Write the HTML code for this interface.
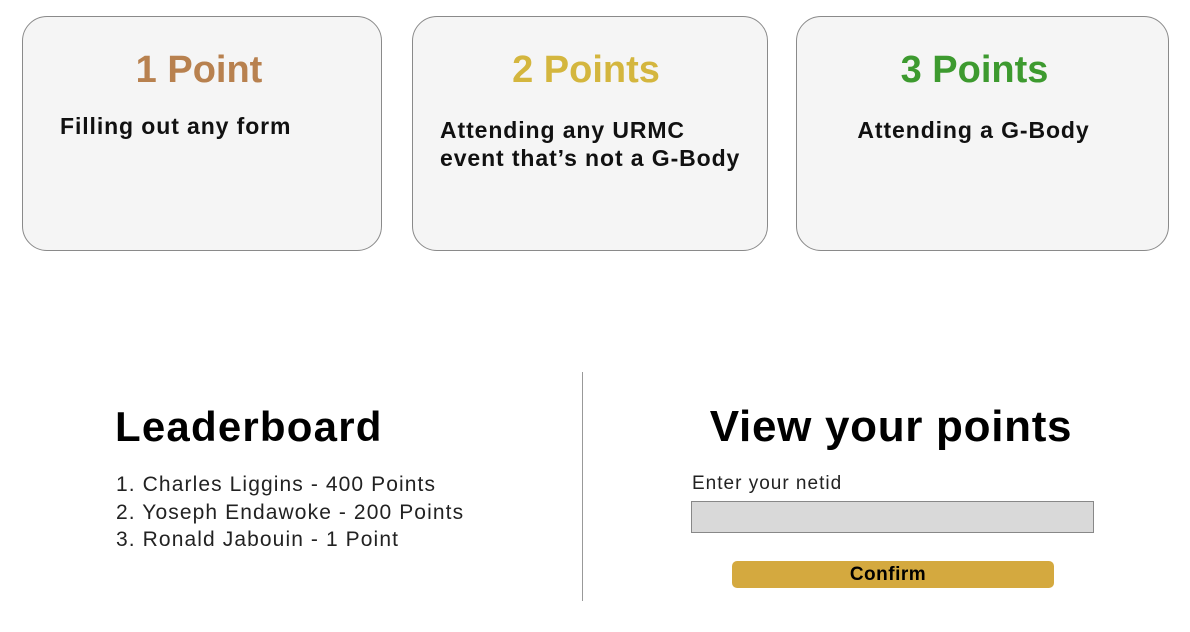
<!DOCTYPE html>
<html><head><meta charset="utf-8"><style>
*{margin:0;padding:0;box-sizing:border-box}
body{width:1190px;height:632px;background:#fff;font-family:"Liberation Sans",sans-serif;position:relative;overflow:hidden;color:#000}
.card{position:absolute;top:16px;height:235px;background:#f5f5f5;border:1px solid #8a8a8a;border-radius:25px}
.t{position:absolute;top:30px;left:0;right:0;text-align:center;font-size:38px;font-weight:bold;line-height:46px}
.b{position:absolute;font-size:23px;font-weight:bold;line-height:28px;color:#111;letter-spacing:0.9px;white-space:nowrap}
.a{position:absolute;white-space:nowrap}
</style></head><body>
<div class="card" style="left:22px;width:360px">
 <div class="t" style="color:#b8814f;padding-right:6px">1 Point</div>
 <div class="b" style="left:37px;top:95px">Filling out any form</div>
</div>
<div class="card" style="left:412px;width:356px">
 <div class="t" style="color:#d4b63e;padding-right:8px">2 Points</div>
 <div class="b" style="left:27px;top:99px">Attending any URMC<br>event that’s not a G-Body</div>
</div>
<div class="card" style="left:796px;width:373px">
 <div class="t" style="color:#3d9a2f;padding-right:16px">3 Points</div>
 <div class="b" style="left:0;right:0;text-align:center;top:99px;padding-right:18px">Attending a G-Body</div>
</div>
<div class="a" style="left:582px;top:372px;width:1px;height:229px;background:#999"></div>
<div class="a" style="left:115px;top:400px;font-size:42px;font-weight:bold;line-height:54px;letter-spacing:1.2px">Leaderboard</div>
<div class="a" style="left:116px;top:471px;font-size:21px;line-height:27.5px;color:#222;letter-spacing:1.1px">1. Charles Liggins - 400 Points<br>2. Yoseph Endawoke - 200 Points<br>3. Ronald Jabouin - 1 Point</div>
<div class="a" style="left:691px;width:400px;text-align:center;top:400px;font-size:44px;font-weight:bold;line-height:54px;letter-spacing:0.7px">View your points</div>
<div class="a" style="left:692px;top:472px;font-size:19px;line-height:24px;color:#222;letter-spacing:1px">Enter your netid</div>
<div class="a" style="left:691px;top:501px;width:403px;height:32px;background:#d9d9d9;border:1px solid #888"></div>
<div class="a" style="left:732px;top:561px;width:322px;height:27px;background:#d4a93f;border-radius:5px;text-align:center;font-size:19px;font-weight:bold;line-height:27px;padding-right:10px;letter-spacing:0.5px">Confirm</div>
</body></html>
